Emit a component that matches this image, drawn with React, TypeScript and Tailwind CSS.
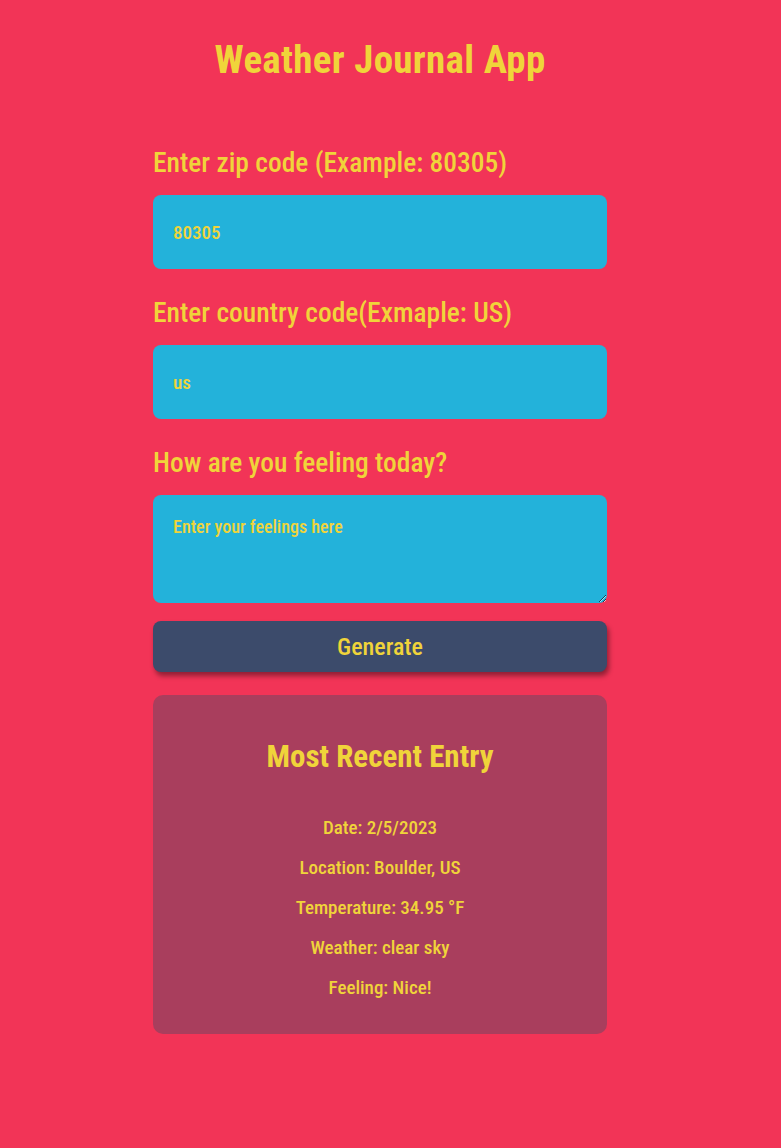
export default function App() {
  return (
    <div className="min-h-[1148px] w-full bg-[#f23457] text-[#f0d43a] font-['Roboto_Condensed',_'Liberation_Sans',_sans-serif]">
      <div className="ml-[153px] flex w-[454px] flex-col pt-[36px]">
        <h1 className="text-center text-[39px] font-bold leading-[48px] tracking-[0.3px]">Weather Journal App</h1>

        <label className="mt-[59px] text-[27.5px] font-medium leading-[40px]">Enter zip code (Example: 80305)</label>
        <input
          defaultValue="80305"
          className="mt-[12px] h-[74px] w-full rounded-[8px] bg-[#23b2da] px-[20px] text-[19px] font-medium text-[#f0d43a] outline-none"
        />

        <label className="mt-[24px] text-[27.5px] font-medium leading-[40px]">Enter country code(Exmaple: US)</label>
        <input
          defaultValue="us"
          className="mt-[12px] h-[74px] w-full rounded-[8px] bg-[#23b2da] px-[20px] text-[19px] font-medium text-[#f0d43a] outline-none"
        />

        <label className="mt-[24px] text-[27.5px] font-medium leading-[40px]">How are you feeling today?</label>
        <textarea
          placeholder="Enter your feelings here"
          className="mt-[12px] block h-[108px] w-full rounded-[8px] bg-[#23b2da] px-[20px] py-[18px] text-[18px] font-medium leading-[28px] text-[#f0d43a] outline-none placeholder:text-[#f0d43a]"
        />

        <button className="mt-[18px] h-[51px] w-full rounded-[8px] bg-[#3c4b6b] text-[24px] font-medium text-[#f0d43a] shadow-[2px_4px_5px_rgba(0,0,0,0.4)]">
          Generate
        </button>

        <div className="mt-[23px] flex h-[339px] flex-col items-center rounded-[10px] bg-[#a93e5d] pt-[42px]">
          <h2 className="text-[31px] font-bold leading-[40px]">Most Recent Entry</h2>
          <div className="mt-[31px] flex flex-col items-center text-[19px] font-medium leading-[40px]">
            <div>Date: 2/5/2023</div>
            <div>Location: Boulder, US</div>
            <div>Temperature: 34.95 °F</div>
            <div>Weather: clear sky</div>
            <div>Feeling: Nice!</div>
          </div>
        </div>
      </div>
    </div>
  );
}
